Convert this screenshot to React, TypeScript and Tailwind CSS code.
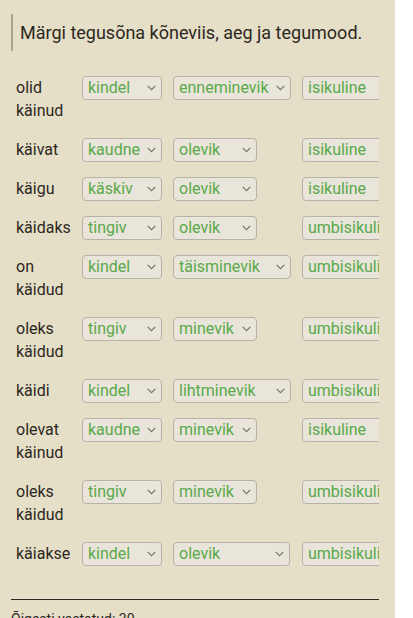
import React from "react";

type Row = { word: string; a: [string, number]; b: [string, number]; c: string };

const rows: Row[] = [
  { word: "olid käinud", a: ["kindel", 80], b: ["enneminevik", 118], c: "isikuline" },
  { word: "käivat", a: ["kaudne", 80], b: ["olevik", 84], c: "isikuline" },
  { word: "käigu", a: ["käskiv", 80], b: ["olevik", 84], c: "isikuline" },
  { word: "käidaks", a: ["tingiv", 80], b: ["olevik", 84], c: "umbisikuline" },
  { word: "on käidud", a: ["kindel", 80], b: ["täisminevik", 118], c: "umbisikuline" },
  { word: "oleks käidud", a: ["tingiv", 80], b: ["minevik", 84], c: "umbisikuline" },
  { word: "käidi", a: ["kindel", 80], b: ["lihtminevik", 118], c: "umbisikuline" },
  { word: "olevat käinud", a: ["kaudne", 80], b: ["minevik", 84], c: "isikuline" },
  { word: "oleks käidud", a: ["tingiv", 80], b: ["minevik", 84], c: "umbisikuline" },
  { word: "käiakse", a: ["kindel", 80], b: ["olevik", 117], c: "umbisikuline" },
];

function Sel({ value, width }: { value: string; width: number }) {
  return (
    <div className="relative shrink-0 h-[23px]" style={{ width }}>
      <select
        defaultValue={value}
        className="appearance-none w-full h-[24px] rounded-[4px] border border-[#b7b2a7] bg-[#e9e5da] pl-[5px] pr-[20px] text-[16px] leading-[22px] text-[#5aa94b] outline-none"
        style={{ fontFamily: "Roboto, 'Liberation Sans', sans-serif" }}
      >
        <option value={value}>{value}</option>
      </select>
      <svg
        className="pointer-events-none absolute right-[6px] top-[9px]"
        width="9"
        height="6"
        viewBox="0 0 9 6"
        fill="none"
      >
        <path d="M0.7 0.8 L4.5 4.6 L8.3 0.8" stroke="#77746c" strokeWidth="1.2" />
      </svg>
    </div>
  );
}

function Sel3({ value }: { value: string }) {
  return (
    <div className="shrink-0 w-[118px] h-[23px]">
      <div className="h-[24px] rounded-[4px] border border-[#b7b2a7] bg-[#e9e5da] pl-[5px] text-[16px] leading-[22px] text-[#5aa94b] whitespace-nowrap overflow-hidden">
        {value}
      </div>
    </div>
  );
}

export default function App() {
  return (
    <div
      className="w-[395px] min-h-screen bg-[#e6dfc8] text-[#2d2721]"
      style={{ fontFamily: "Roboto, 'Liberation Sans', sans-serif" }}
    >
      <div className="px-[11px] pt-[14px] w-[395px]">
        <div className="border-l-2 border-[#aba38e] pl-[7px] text-[18px] leading-[37px]">
          Märgi tegusõna kõneviis, aeg ja tegumood.
        </div>
        <div className="mt-[17px] w-[368px] overflow-hidden">
          {rows.map((r, i) => (
            <div key={i} className="flex items-start gap-[11px] py-[8px] pl-[5px] w-[500px]">
              <div className="w-[55px] shrink-0 text-[16px] leading-[23px]">{r.word}</div>
              <Sel value={r.a[0]} width={r.a[1]} />
              <div className="w-[118px] shrink-0">
                <Sel value={r.b[0]} width={r.b[1]} />
              </div>
              <Sel3 value={r.c} />
            </div>
          ))}
        </div>
        <div className="mt-[26px] w-[368px] border-t border-[#2d2721]" />
        <div className="mt-[9px] text-[14px] leading-[20px]">Õigesti vastatud: 30</div>
      </div>
    </div>
  );
}
